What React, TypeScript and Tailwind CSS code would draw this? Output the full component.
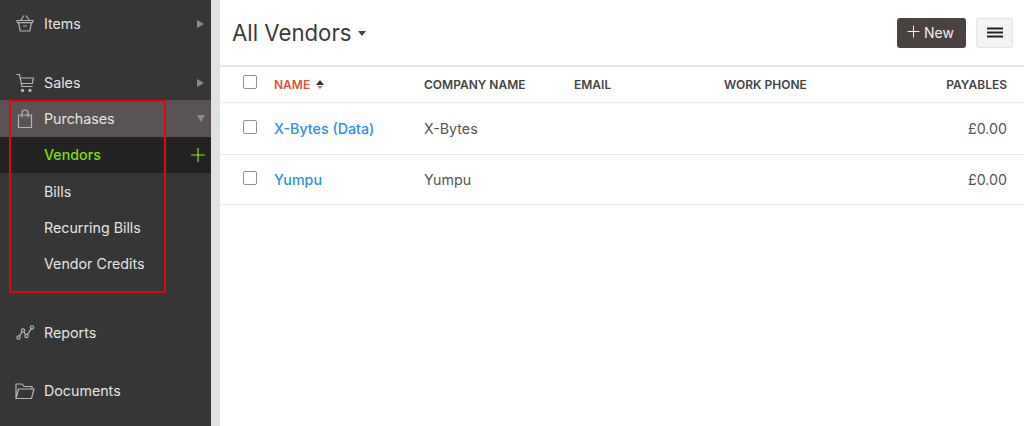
// Purpose: Vendors list screen with the dark sidebar and Purchases group open.
import { Plus } from 'lucide-react';
import type { ReactNode } from 'react';

const iconClass = 'w-[20px] h-[20px] text-[#b4b4b4] shrink-0';

function BasketIcon() {
  return (
    <svg viewBox="0 0 20 20" fill="none" stroke="currentColor" strokeWidth="1.2" className={iconClass}>
      <path d="M2 6.5h16l-.6 2.2H2.6zM3.6 8.7l1.6 8.3h9.6l1.6-8.3M5.5 6.5l3.5-5M14.5 6.5l-3.5-5M8 12h4" />
    </svg>
  );
}

function CartIcon() {
  return (
    <svg viewBox="0 0 20 20" fill="none" stroke="currentColor" strokeWidth="1.2" className={iconClass}>
      <path d="M1.5 1.5h3l2.5 12h10.5M5 5h13.5l-1.2 5.5H6.2" />
      <circle cx="7.5" cy="17.5" r="1.1" fill="currentColor" />
      <circle cx="15" cy="17.5" r="1.1" fill="currentColor" />
    </svg>
  );
}

function BagIcon() {
  return (
    <svg viewBox="0 0 20 20" fill="none" stroke="currentColor" strokeWidth="1.2" className={iconClass}>
      <path d="M3.5 6h13v12.5h-13zM7 8.5V3.5a3 2.5 0 0 1 6 0v5" />
    </svg>
  );
}

function ReportsIcon() {
  return (
    <svg viewBox="0 0 20 20" fill="none" stroke="currentColor" strokeWidth="1.2" className={iconClass}>
      <circle cx="3.5" cy="14.5" r="1.6" />
      <circle cx="8" cy="7.5" r="1.6" />
      <circle cx="11.5" cy="13" r="1.6" />
      <circle cx="17" cy="4.5" r="1.6" />
      <path d="M4.4 13.1l2.7-4.2M8.9 8.9l1.7 2.7M12.4 11.6l3.7-5.7" />
    </svg>
  );
}

function FolderIcon() {
  return (
    <svg viewBox="0 0 20 20" fill="none" stroke="currentColor" strokeWidth="1.2" className={iconClass}>
      <path d="M1 17.5V3h6l2 2.5h8V8M1 17.5L3.5 8H19l-2.5 9.5z" />
    </svg>
  );
}

function NavRow({ icon, label, arrow, heightClass = 'h-[36px]' }: { icon: ReactNode; label: string; arrow?: boolean; heightClass?: string }) {
  return (
    <div className={`${heightClass} flex items-center pl-[15px] pr-[6px]`}>
      {icon}
      <span className="ml-[9px] flex-1 text-[14.25px] text-[#e4e4e4]">{label}</span>
      {arrow && <span className="w-0 h-0 mr-[1px] border-y-[4.5px] border-y-transparent border-l-[7px] border-l-[#8a8a8a]" />}
    </div>
  );
}

function SubRow({ label }: { label: string }) {
  return <div className="h-[36.4px] flex items-center pl-[44px] text-[14.25px] text-[#e4e4e4]">{label}</div>;
}

function Checkbox({ className }: { className: string }) {
  return <span className={`block w-[14px] h-[14px] border border-[#8f8f8f] rounded-[2px] bg-white ${className}`} />;
}

const vendors = [
  { name: 'X-Bytes (Data)', company: 'X-Bytes', payables: '£0.00', rowClass: 'h-[52px]' },
  { name: 'Yumpu', company: 'Yumpu', payables: '£0.00', rowClass: 'h-[50px]' },
];

const colClass = 'grid grid-cols-[31px_150px_150px_150px_1fr] items-center pl-[23px] pr-[17px]';

export default function App() {
  return (
    <div className="relative flex w-[1024px] h-[426px] overflow-hidden bg-white font-['Inter',sans-serif]">
      <aside className="w-[211px] shrink-0 bg-[#363636] pt-[6px]">
        <NavRow icon={<BasketIcon />} label="Items" arrow />
        <div className="h-[23px]" />
        <NavRow icon={<CartIcon />} label="Sales" arrow heightClass="h-[35px]" />
        <div className="h-[37px] flex items-center pl-[15px] pr-[6px] bg-[#595453]">
          <BagIcon />
          <span className="ml-[9px] flex-1 text-[14.25px] text-[#e4e4e4]">Purchases</span>
          <span className="w-0 h-0 border-x-[4.5px] border-x-transparent border-t-[7px] border-t-[#8f8b8a]" />
        </div>
        <div className="h-[36px] flex items-center justify-between pl-[44px] pr-[2px] bg-[#222222]">
          <span className="text-[14.25px] font-medium text-[#7ce000]">Vendors</span>
          <Plus className="w-[22px] h-[22px] text-[#84f000]" strokeWidth={1.3} />
        </div>
        <SubRow label="Bills" />
        <SubRow label="Recurring Bills" />
        <SubRow label="Vendor Credits" />
        <div className="h-[33px]" />
        <NavRow icon={<ReportsIcon />} label="Reports" heightClass="h-[35px]" />
        <div className="h-[23px]" />
        <NavRow icon={<FolderIcon />} label="Documents" />
      </aside>
      <div className="w-[9px] shrink-0 bg-[#e1e1e1]" />

      <main className="flex-1 min-w-0">
        <header className="h-[67px] flex items-center justify-between border-b-2 border-[#e6e6e6] pl-[12px] pr-[11px]">
          <div className="flex items-center gap-[7px]">
            <h1 className="text-[22.2px] text-[#3a3a3a]">All Vendors</h1>
            <span className="w-0 h-0 mt-[2px] border-x-[4px] border-x-transparent border-t-[5px] border-t-[#444444]" />
          </div>
          <div className="flex items-center gap-[10px]">
            <button className="h-[30px] w-[69px] flex items-center gap-[1px] pl-[7px] rounded-[3px] bg-[#4a4241] text-[14px] text-[#f0eeee]">
              <Plus className="w-[19px] h-[19px] -mt-[2px]" strokeWidth={1.3} />
              New
            </button>
            <button className="h-[30px] w-[37px] flex items-center justify-center rounded-[3px] border border-[#e4e4e4] bg-[#f4f4f4]">
              <svg viewBox="0 0 16 11" className="w-[16px] h-[11px]" fill="none" stroke="#222222" strokeWidth="2">
                <path d="M0 1.5h16M0 5.5h16M0 9.5h16" />
              </svg>
            </button>
          </div>
        </header>

        <div className={`${colClass} h-[36px] border-b border-[#ececec] text-[12px] font-semibold text-[#444444]`}>
          <Checkbox className="mb-[6px]" />
          <div className="flex items-center gap-[6px] text-[#e0503c]">
            NAME
            <span className="flex flex-col gap-px">
              <span className="w-0 h-0 border-x-[4px] border-x-transparent border-b-[5px] border-b-[#333333]" />
              <span className="w-0 h-0 ml-[1px] border-x-[3px] border-x-transparent border-t-[3px] border-t-[#8a8a8a]" />
            </span>
          </div>
          <div>COMPANY NAME</div>
          <div>EMAIL</div>
          <div className="flex justify-between">
            <span>WORK PHONE</span>
            <span>PAYABLES</span>
          </div>
        </div>

        {vendors.map(vendor => (
          <div key={vendor.name} className={`${colClass} ${vendor.rowClass} border-b border-[#e8e8e8] text-[14.25px] text-[#555555]`}>
            <Checkbox className="mb-[4px]" />
            <div className="font-medium text-[#2f8fe6]">{vendor.name}</div>
            <div>{vendor.company}</div>
            <div />
            <div className="text-right">{vendor.payables}</div>
          </div>
        ))}
      </main>

      {/* Annotation drawn over the screenshot */}
      <div className="absolute left-[9px] top-[100px] w-[157px] h-[193px] border-2 border-[#d90b0b] rounded-[1px] pointer-events-none" />
    </div>
  );
}
